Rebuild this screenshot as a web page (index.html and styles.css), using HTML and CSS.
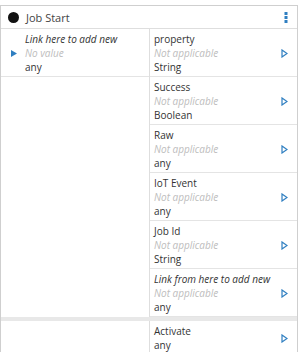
FILE: index.html
```html
<!DOCTYPE html>
<html lang="en">
<head>
  <meta charset="UTF-8" />
  <title>Job Start</title>
  <link rel="stylesheet" href="styles.css">
</head>
<body>
  <div class="node">
    <div class="node-header">
      <span class="dot"></span>
      <span class="node-title">Job Start</span>
      <svg class="kebab" width="4" height="11" viewBox="0 0 4 11">
        <rect x="0.5" y="0" width="3" height="3" fill="#2f7fc1"/>
        <rect x="0.5" y="4" width="3" height="3" fill="#2f7fc1"/>
        <rect x="0.5" y="8" width="3" height="3" fill="#2f7fc1"/>
      </svg>
    </div>

    <div class="section">
      <div class="inputs">
        <div class="port in-port">
          <svg class="arrow-in" width="6" height="7" viewBox="0 0 6 7">
            <polygon points="0,0 6,3.5 0,7" fill="#2f7fc1"/>
          </svg>
          <div class="port-text">
            <div class="hint">Link here to add new</div>
            <div class="muted">No value</div>
            <div>any</div>
          </div>
        </div>
      </div>
      <div class="outputs">
        <div class="port">
          <div class="port-text">
            <div>property</div>
            <div class="muted">Not applicable</div>
            <div>String</div>
          </div>
          <svg class="arrow-out" width="7" height="9" viewBox="0 0 7 9"><polygon points="1,1 6,4.5 1,8" fill="none" stroke="#2f7fc1" stroke-width="1.2"/></svg>
        </div>
        <div class="port">
          <div class="port-text">
            <div>Success</div>
            <div class="muted">Not applicable</div>
            <div>Boolean</div>
          </div>
          <svg class="arrow-out" width="7" height="9" viewBox="0 0 7 9"><polygon points="1,1 6,4.5 1,8" fill="none" stroke="#2f7fc1" stroke-width="1.2"/></svg>
        </div>
        <div class="port">
          <div class="port-text">
            <div>Raw</div>
            <div class="muted">Not applicable</div>
            <div>any</div>
          </div>
          <svg class="arrow-out" width="7" height="9" viewBox="0 0 7 9"><polygon points="1,1 6,4.5 1,8" fill="none" stroke="#2f7fc1" stroke-width="1.2"/></svg>
        </div>
        <div class="port">
          <div class="port-text">
            <div>IoT Event</div>
            <div class="muted">Not applicable</div>
            <div>any</div>
          </div>
          <svg class="arrow-out" width="7" height="9" viewBox="0 0 7 9"><polygon points="1,1 6,4.5 1,8" fill="none" stroke="#2f7fc1" stroke-width="1.2"/></svg>
        </div>
        <div class="port">
          <div class="port-text">
            <div>Job Id</div>
            <div class="muted">Not applicable</div>
            <div>String</div>
          </div>
          <svg class="arrow-out" width="7" height="9" viewBox="0 0 7 9"><polygon points="1,1 6,4.5 1,8" fill="none" stroke="#2f7fc1" stroke-width="1.2"/></svg>
        </div>
        <div class="port">
          <div class="port-text">
            <div class="hint">Link from here to add new</div>
            <div class="muted">Not applicable</div>
            <div>any</div>
          </div>
          <svg class="arrow-out" width="7" height="9" viewBox="0 0 7 9"><polygon points="1,1 6,4.5 1,8" fill="none" stroke="#2f7fc1" stroke-width="1.2"/></svg>
        </div>
      </div>
    </div>

    <div class="section events">
      <div class="inputs"></div>
      <div class="outputs">
        <div class="port">
          <div class="port-text">
            <div>Activate</div>
            <div>any</div>
          </div>
          <svg class="arrow-out" width="7" height="9" viewBox="0 0 7 9"><polygon points="1,1 6,4.5 1,8" fill="none" stroke="#2f7fc1" stroke-width="1.2"/></svg>
        </div>
      </div>
    </div>
  </div>
</body>
</html>
```

FILE: styles.css
```css
* {
  margin: 0;
  padding: 0;
  box-sizing: border-box;
}

html, body {
  width: 100%;
  height: 100%;
  overflow: hidden;
  background: #fff;
  font-family: "Open Sans", sans-serif;
  font-size: 10px;
  color: #333;
}

.node {
  margin-top: 5px;
  width: 298px;
  border: 1px solid #cfcfcf;
  border-bottom: none;
  background: #fff;
}

.node-header {
  display: flex;
  align-items: center;
  height: 23px;
  padding: 0 8px 0 7px;
  border-bottom: 1px solid #dedede;
}

.dot {
  width: 11px;
  height: 11px;
  border-radius: 50%;
  background: #111;
  margin-right: 7px;
}

.node-title {
  flex: 1;
  font-size: 11px;
  color: #444;
}

.kebab {
  margin-right: 1px;
}

.section {
  display: grid;
  grid-template-columns: 149px 1fr;
}

.inputs {
  border-right: 1px solid #dedede;
}

.port {
  display: flex;
  align-items: center;
  height: 48px;
  padding: 3px 4px;
  border-bottom: 1px solid #e4e4e4;
}

.port-text {
  flex: 1;
  line-height: 14px;
}

.in-port {
  padding-left: 10px;
}

.arrow-in {
  margin-right: 8px;
  margin-top: 2px;
}

.arrow-out {
  margin-right: 5px;
  margin-top: 1px;
}

.hint {
  font-style: italic;
  color: #333;
}

.muted {
  font-style: italic;
  color: #bdbdbd;
}

.events {
  border-top: 4px solid #e8e8e8;
}

.events .port {
  height: 34px;
  border-bottom: none;
}
```
